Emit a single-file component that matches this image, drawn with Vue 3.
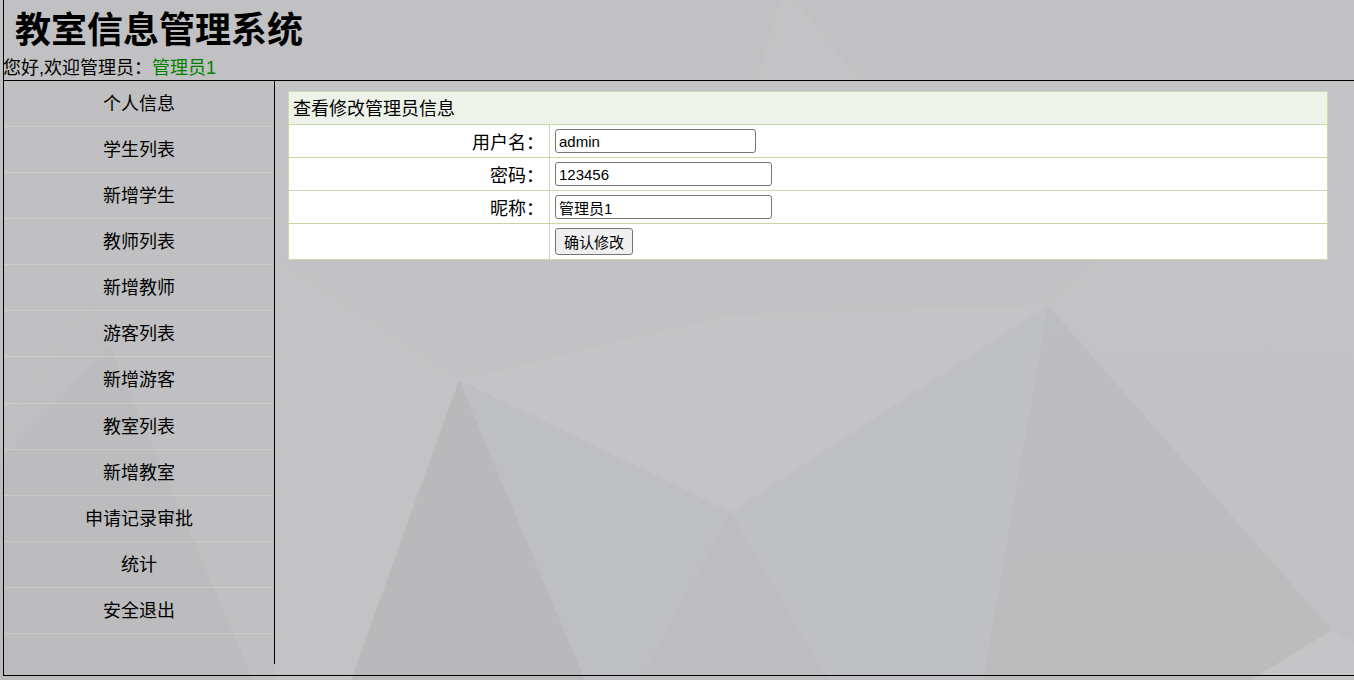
<script setup>
const menu = ['个人信息','学生列表','新增学生','教师列表','新增教师','游客列表','新增游客','教室列表','新增教室','申请记录审批','统计','安全退出']
const facets = [
  { p: '0,0 1354,0 1354,680 0,680', f: '#c1c1c3' },
  { p: '275,81 1354,81 1354,680 275,680', f: '#c3c3c5' },
  { p: '0,80 274,80 274,680 0,680', f: '#c0c0c2' },
  { p: '93,300 110,347 253,680 200,680 0,462 0,430', f: '#bfbfc1' },
  { p: '110,347 253,680 0,680 0,462', f: '#bcbcbe' },
  { p: '780,0 795,0 880,105 750,105', f: '#c3c3c5' },
  { p: '459,380 730,315 1048,305 731,512', f: '#c4c4c6' },
  { p: '275,260 459,380 730,315 1048,305 1100,260', f: '#c2c2c4' },
  { p: '459,380 731,512 828,680 585,680', f: '#bebfc2' },
  { p: '731,512 828,680 640,680', f: '#bdbdc0' },
  { p: '459,380 585,680 351,680', f: '#b9b9bb' },
  { p: '731,512 1048,305 983,680 828,680', f: '#bfc0c3' },
  { p: '1048,305 1332,630 1251,680 983,680', f: 'url(#mid)' },
  { p: '1048,305 1354,260 1354,642 1332,630', f: 'url(#side)' },
  { p: '1332,630 1354,642 1354,680 1251,680', f: '#c5c5c7' }
]
</script>

<template>
  <div class="page">
    <svg class="backdrop" width="1354" height="680" viewBox="0 0 1354 680" aria-hidden="true">
      <defs>
        <linearGradient id="mid" x1="0" y1="0" x2="0" y2="1">
          <stop offset="0" stop-color="#bcbdc0" />
          <stop offset="1" stop-color="#bcbcbd" />
        </linearGradient>
        <linearGradient id="side" x1="0" y1="0" x2="0" y2="1">
          <stop offset="0" stop-color="#c3c3c5" />
          <stop offset="0.55" stop-color="#c2c2c4" />
          <stop offset="1" stop-color="#c0c1c4" />
        </linearGradient>
      </defs>
      <polygon v-for="(item, i) in facets" :key="i" :points="item.p" :fill="item.f" />
    </svg>
    <div class="frame">
      <header class="top">
        <h1 class="title">教室信息管理系统</h1>
        <div class="welcome">您好,欢迎管理员：<span class="who">管理员1</span></div>
      </header>
      <div class="body">
        <nav class="side">
          <a v-for="m in menu" :key="m" class="link">{{ m }}</a>
        </nav>
        <main class="content">
          <table class="form">
            <colgroup>
              <col class="c1" />
              <col />
            </colgroup>
            <tbody>
              <tr class="head"><td colspan="2">查看修改管理员信息</td></tr>
              <tr class="green">
                <td class="label">用户名：</td>
                <td class="field"><input class="in short" value="admin" /></td>
              </tr>
              <tr>
                <td class="label">密码：</td>
                <td class="field"><input class="in" value="123456" /></td>
              </tr>
              <tr class="green">
                <td class="label">昵称：</td>
                <td class="field"><input class="in" value="管理员1" /></td>
              </tr>
              <tr class="last">
                <td class="label"></td>
                <td class="field"><button class="btn">确认修改</button></td>
              </tr>
            </tbody>
          </table>
        </main>
      </div>
    </div>
  </div>
</template>

<style>
html, body { margin: 0; padding: 0; overflow: hidden; }
</style>

<style scoped>
.page {
  position: relative;
  width: 1354px;
  height: 680px;
  overflow: hidden;
  font-family: "Liberation Sans", "Noto Sans CJK SC", sans-serif;
  font-size: 18px;
  color: #000;
}
.backdrop { position: absolute; left: 0; top: 0; display: block; }
.frame {
  position: relative;
  margin-left: 3px;
  height: 676px;
  box-sizing: border-box;
  border-left: 1px solid #000;
  border-bottom: 1px solid #000;
}
.top {
  height: 81px;
  box-sizing: border-box;
  border-bottom: 1px solid #000;
}
.title {
  margin: 0;
  padding: 7px 0 0 11px;
  height: 55px;
  box-sizing: border-box;
  font-size: 36px;
  line-height: 48px;
  font-weight: bold;
}
.welcome { height: 25px; line-height: 27px; margin-left: -1px; }
.who { color: #008000; }
.body { display: flex; align-items: flex-start; }
.side {
  width: 270px;
  height: 583px;
  flex: none;
  border-right: 1px solid #000;
}
.link {
  display: block;
  height: 46.09px;
  line-height: 47px;
  box-sizing: border-box;
  text-align: center;
  border-bottom: 1px dotted rgba(255, 255, 255, 0.3);
}
.content { padding: 10px 0 0 13px; }
.form {
  width: 1040px;
  table-layout: fixed;
  border-collapse: collapse;
  background: #fff;
  outline: 1px solid #cbdcab;
  outline-offset: -1px;
}
.c1 { width: 261px; }
.form td {
  height: 33px;
  padding: 0 5px;
  box-sizing: border-box;
  border: 1px solid #cdd4b8;
}
.green td { border-bottom-color: #c9d6a6; }
.form .head td {
  background: #edf3e9;
  border-color: #cbdcab;
  padding: 2px 5px 0 4px;
  line-height: 30px;
}
.label { text-align: right; }
.form .last td { height: 36px; }
.in {
  display: block;
  box-sizing: border-box;
  width: 217px;
  height: 24px;
  margin: 0;
  padding: 1px 3px;
  border: 1px solid #767676;
  border-radius: 3px;
  background: #fff;
  color: #000;
  font: 15px "Liberation Sans", "Noto Sans CJK SC", sans-serif;
}
.short { width: 201px; }
.btn {
  display: block;
  box-sizing: border-box;
  width: 78px;
  height: 27px;
  margin: 0;
  padding: 0 6px 0 7px;
  border: 1px solid #767676;
  border-radius: 3px;
  background: #efefef;
  color: #000;
  text-indent: -1px;
  font: 15px "Liberation Sans", "Noto Sans CJK SC", sans-serif;
}
</style>
